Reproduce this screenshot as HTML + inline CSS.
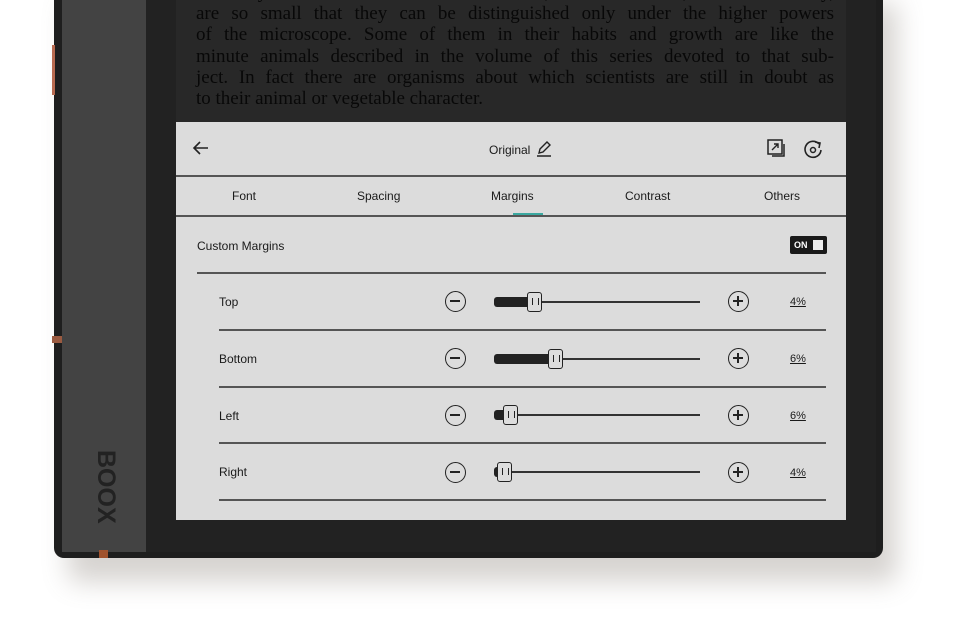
<!DOCTYPE html>
<html><head><meta charset="utf-8"><style>
*{margin:0;padding:0;box-sizing:border-box}
body{width:960px;height:623px;background:#fff;position:relative;overflow:hidden;font-family:"Liberation Sans",sans-serif}
.dev{position:absolute;left:54px;top:-20px;width:829px;height:578px;background:#1e1e1e;border-radius:0 0 10px 10px;box-shadow:14px 24px 26px rgba(120,110,100,.3)}
.spine{position:absolute;left:62px;top:0;width:84px;height:552px;background:#434343}
.bez{position:absolute;left:146px;top:0;width:730px;height:552px;background:#222}
.txt{position:absolute;left:176px;top:0;width:670px;height:122px;background:#282828;font-family:"Liberation Serif",serif;font-size:19px;color:#080808;line-height:21.3px}
.txt p{position:absolute;left:20px;right:12px;text-align:justify;text-align-last:justify;white-space:nowrap}
.panel{position:absolute;left:176px;top:122px;width:670px;height:398px;background:#dcdcdc;color:#1a1a1a;font-size:12px}
.hl{position:absolute;height:2px;background:#555}
.a{position:absolute}
.circ{position:absolute;width:21px;height:21px;border:1.6px solid #222;border-radius:50%}
.circ:before{content:"";position:absolute;left:4px;top:8.2px;width:10px;height:1.6px;background:#222}
.plus:after{content:"";position:absolute;top:4px;left:8.2px;height:10px;width:1.6px;background:#222}
.track{position:absolute;left:318px;width:206px;height:1.5px;background:#333}
.fill{position:absolute;left:318px;height:10px;background:#222;border-radius:3px 0 0 3px}
.thumb{position:absolute;width:15px;height:20px;background:#ddd;border:1.5px solid #222;border-radius:3px}
.thumb:before{content:"";position:absolute;left:3.5px;top:5px;width:5px;height:7px;border-left:1.2px solid #222;border-right:1.2px solid #222}
.val{position:absolute;left:614px;font-size:11px;text-decoration:underline}
</style></head><body>
<div class="dev"></div>
<div class="spine"></div>
<div style="position:absolute;left:52px;top:45px;width:3px;height:50px;background:#b86a50"></div>
<div style="position:absolute;left:52px;top:336px;width:10px;height:7px;background:#9a5a40"></div>
<div style="position:absolute;left:99px;top:550px;width:9px;height:8px;background:#a0522d"></div>
<div style="position:absolute;top:450px;font-size:25px;font-weight:bold;color:#222;transform:rotate(90deg);transform-origin:left top;left:120px;letter-spacing:0px">BOOX</div>
<div class="bez"></div>
<div class="txt">
<p style="top:-18px">of many kinds of animals in the world, some of them, the most lowly,</p>
<p style="top:3px">are so small that they can be distinguished only under the higher powers</p>
<p style="top:24px">of the microscope. Some of them in their habits and growth are like the</p>
<p style="top:46px">minute animals described in the volume of this series devoted to that sub-</p>
<p style="top:67px">ject. In fact there are organisms about which scientists are still in doubt as</p>
<p style="top:88px;text-align-last:left">to their animal or vegetable character.</p>
</div>
<div class="panel">
<svg class="a" style="left:16px;top:18px" width="18" height="16" viewBox="0 0 18 16"><path d="M16 8H2M8 2L2 8l6 6" fill="none" stroke="#222" stroke-width="1.6"/></svg>
<div class="a" style="left:313px;top:21px">Original</div>
<svg class="a" style="left:359px;top:18px" width="18" height="18" viewBox="0 0 18 18"><path d="M4 13l1-4 7-7 3 3-7 7zM2 16h14" fill="none" stroke="#222" stroke-width="1.4"/></svg>
<svg class="a" style="left:590px;top:16px" width="22" height="22" viewBox="0 0 22 22"><rect x="2" y="2" width="14" height="14" fill="none" stroke="#222" stroke-width="1.5"/><path d="M18 6v12H6" fill="none" stroke="#222" stroke-width="1.5"/><path d="M6 12l6-6M8 6h4v4" fill="none" stroke="#222" stroke-width="1.4"/></svg>
<svg class="a" style="left:626px;top:16px" width="22" height="22" viewBox="0 0 22 22"><path d="M17 6A8 8 0 1 0 19 12" fill="none" stroke="#222" stroke-width="1.6"/><path d="M13 4l5 1-1 5" fill="none" stroke="#222" stroke-width="1.6"/><circle cx="11" cy="12" r="2.5" fill="none" stroke="#222" stroke-width="1.5"/></svg>
<div class="hl" style="left:0;width:670px;top:53px"></div>
<div class="a" style="left:56px;top:67px">Font</div>
<div class="a" style="left:181px;top:67px">Spacing</div>
<div class="a" style="left:315px;top:67px">Margins</div>
<div class="a" style="left:337px;top:91px;width:30px;height:2px;background:#3aa8a0"></div>
<div class="a" style="left:449px;top:67px">Contrast</div>
<div class="a" style="left:588px;top:67px">Others</div>
<div class="hl" style="left:0;width:670px;top:93px"></div>
<div class="a" style="left:21px;top:117px">Custom Margins</div>
<div class="a" style="left:614px;top:114px;width:37px;height:18px;background:#1a1a1a;border-radius:2px;color:#fff;font-size:9px;font-weight:bold;padding:4px 0 0 4px">ON<span style="position:absolute;right:4px;top:4px;width:10px;height:10px;background:#eee"></span></div>
<div class="hl" style="left:21px;width:629px;top:150px"></div>

<div class="a" style="left:43px;top:173px">Top</div>
<div class="circ" style="left:269px;top:169px"></div>
<div class="track" style="top:179px"></div><div class="fill" style="top:175px;width:36px"></div><div class="thumb" style="left:351px;top:170px"></div>
<div class="circ plus" style="left:552px;top:169px"></div>
<div class="val" style="top:174px">4%</div>
<div class="hl" style="left:43px;width:607px;top:207px"></div>

<div class="a" style="left:43px;top:230px">Bottom</div>
<div class="circ" style="left:269px;top:226px"></div>
<div class="track" style="top:236px"></div><div class="fill" style="top:232px;width:57px"></div><div class="thumb" style="left:372px;top:227px"></div>
<div class="circ plus" style="left:552px;top:226px"></div>
<div class="val" style="top:231px">6%</div>
<div class="hl" style="left:43px;width:607px;top:264px"></div>

<div class="a" style="left:43px;top:287px">Left</div>
<div class="circ" style="left:269px;top:283px"></div>
<div class="track" style="top:292px"></div><div class="fill" style="top:288px;width:12px"></div><div class="thumb" style="left:327px;top:283px"></div>
<div class="circ plus" style="left:552px;top:283px"></div>
<div class="val" style="top:288px">6%</div>
<div class="hl" style="left:43px;width:607px;top:320px"></div>

<div class="a" style="left:43px;top:343px">Right</div>
<div class="circ" style="left:269px;top:340px"></div>
<div class="track" style="top:349px"></div><div class="fill" style="top:345px;width:6px"></div><div class="thumb" style="left:321px;top:340px"></div>
<div class="circ plus" style="left:552px;top:340px"></div>
<div class="val" style="top:345px">4%</div>
<div class="hl" style="left:43px;width:607px;top:377px"></div>
</div>
</body></html>
